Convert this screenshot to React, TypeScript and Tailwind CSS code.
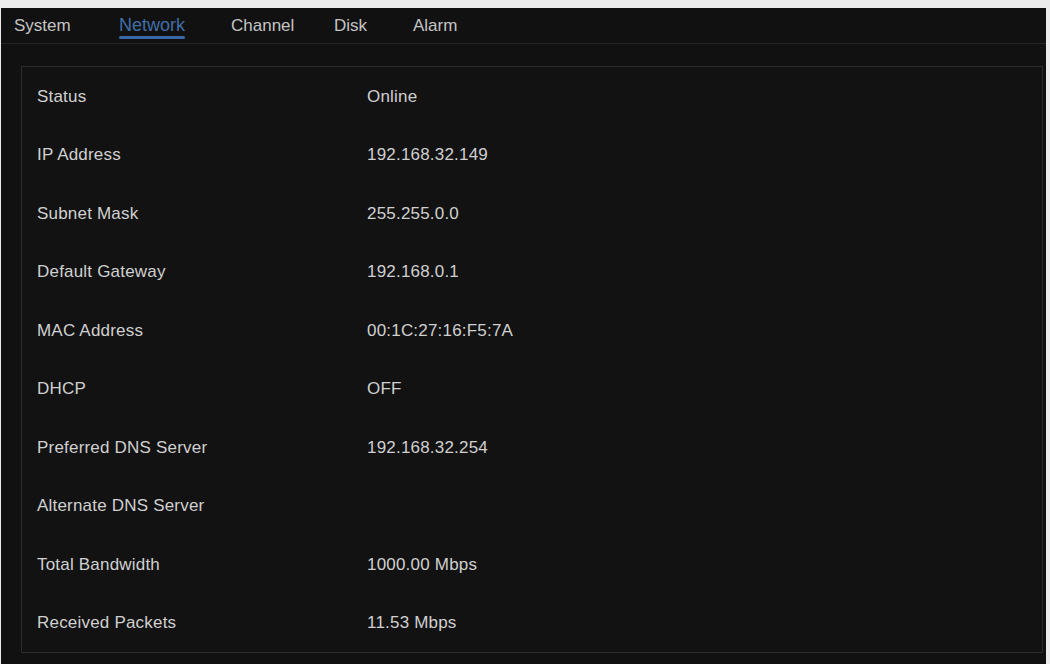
const tabs = [
  { label: "System", w: "w-[105px]" },
  { label: "Network", w: "w-[112px]", active: true },
  { label: "Channel", w: "w-[103px]" },
  { label: "Disk", w: "w-[79px]" },
  { label: "Alarm", w: "w-[60px]" },
];

const rows = [
  ["Status", "Online"],
  ["IP Address", "192.168.32.149"],
  ["Subnet Mask", "255.255.0.0"],
  ["Default Gateway", "192.168.0.1"],
  ["MAC Address", "00:1C:27:16:F5:7A"],
  ["DHCP", "OFF"],
  ["Preferred DNS Server", "192.168.32.254"],
  ["Alternate DNS Server", ""],
  ["Total Bandwidth", "1000.00 Mbps"],
  ["Received Packets", "11.53 Mbps"],
];

export default function App() {
  return (
    <div className="h-[664px] w-[1050px] overflow-hidden bg-[#ececec] pt-[8px] font-['Liberation_Sans',Arial,sans-serif]">
      <div className="ml-[1px] flex h-[656px] w-[1045px] flex-col bg-[#111111]">
        {/* tab bar */}
        <div className="flex h-[36px] items-stretch border-b border-[#242424] pl-[13px]">
          {tabs.map((tab) => (
            <div key={tab.label} className={`${tab.w} flex items-center`}>
              <span
                className={
                  tab.active
                    ? "relative text-[18px] text-[#3f6fa6]"
                    : "text-[17px] text-[#c4c4c4]"
                }
              >
                {tab.label}
                {tab.active && (
                  <span className="absolute left-0 right-0 top-[24px] h-[3px] rounded-full bg-[#3a67a8]" />
                )}
              </span>
            </div>
          ))}
        </div>

        {/* info panel */}
        <div className="ml-[20px] mt-[22px] w-[1022px] border border-[#2c2c2c] bg-[#121212] pl-[15px]">
          {rows.map(([label, value]) => (
            <div key={label} className="flex h-[58.5px] items-center text-[17px] tracking-[0.2px] text-[#d0d0d0]">
              <div className="w-[330px]">{label}</div>
              <div>{value}</div>
            </div>
          ))}
        </div>
      </div>
    </div>
  );
}
